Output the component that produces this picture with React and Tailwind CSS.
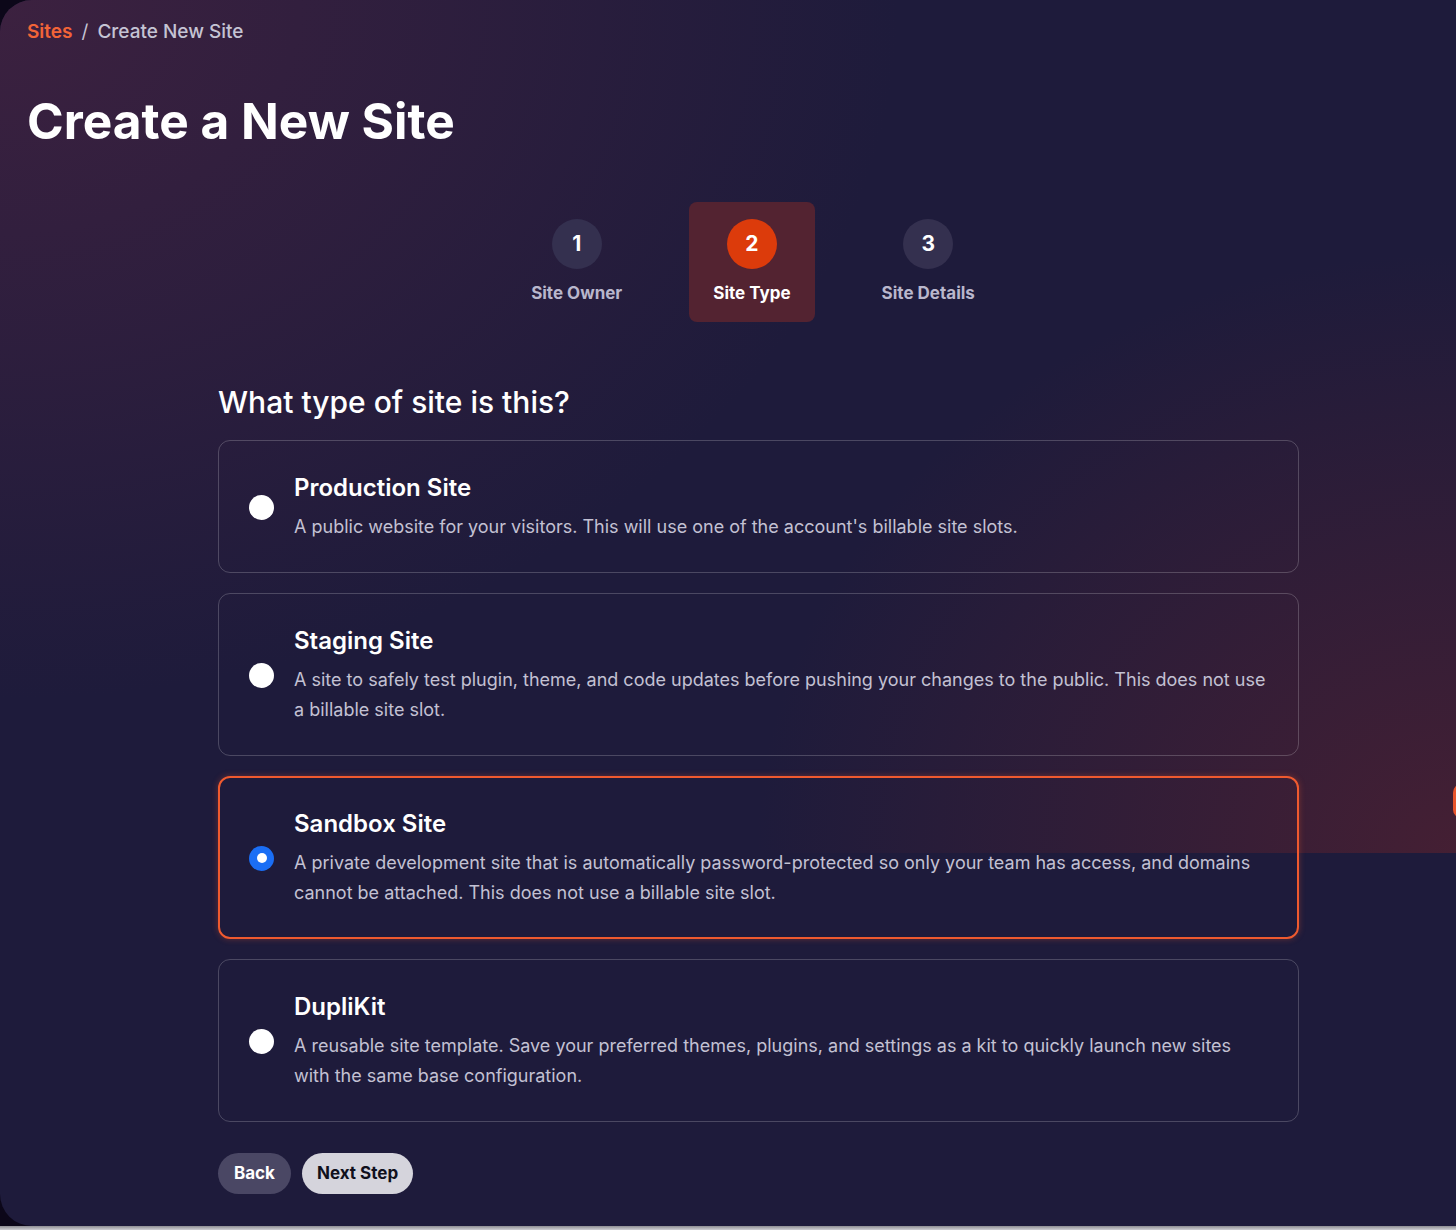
import { useState } from 'react'

const steps = [
  { n: 1, label: 'Site Owner' },
  { n: 2, label: 'Site Type' },
  { n: 3, label: 'Site Details' },
]

const siteTypes = [
  {
    id: 'production',
    title: 'Production Site',
    text: "A public website for your visitors. This will use one of the account's billable site slots.",
  },
  {
    id: 'staging',
    title: 'Staging Site',
    text: 'A site to safely test plugin, theme, and code updates before pushing your changes to the public. This does not use a billable site slot.',
  },
  {
    id: 'sandbox',
    title: 'Sandbox Site',
    text: 'A private development site that is automatically password-protected so only your team has access, and domains cannot be attached. This does not use a billable site slot.',
  },
  {
    id: 'duplikit',
    title: 'DupliKit',
    text: 'A reusable site template. Save your preferred themes, plugins, and settings as a kit to quickly launch new sites with the same base configuration.',
  },
]

function Stepper({ current }) {
  return (
    <div className="flex justify-center gap-[43px] pl-[50px]">
      {steps.map((step) => {
        const active = step.n === current
        return (
          <div
            key={step.n}
            className={
              'flex flex-col items-center gap-3 rounded-lg px-6 py-[17px] ' +
              (active ? 'bg-[#532331]' : '')
            }
          >
            <div
              className={
                'flex h-[50px] w-[50px] items-center justify-center rounded-full text-[21px] font-bold text-white ' +
                (active ? 'bg-[#dc3b0b]' : 'bg-[#34304f]')
              }
            >
              {step.n}
            </div>
            <span className={'text-[17px] font-bold leading-6 ' + (active ? 'text-white' : 'text-[#b9b7cc]')}>
              {step.label}
            </span>
          </div>
        )
      })}
    </div>
  )
}

function TypeCard({ item, selected, onSelect }) {
  return (
    <button
      type="button"
      onClick={onSelect}
      className={
        'flex w-full items-center gap-5 rounded-xl text-left ' +
        (selected
          ? 'border-2 border-[#ef5a2f] px-[29px] pb-[29px] pt-[30px] shadow-[0_0_6px_rgba(239,90,47,0.35)]'
          : 'border border-white/20 px-[30px] pb-[30px] pt-[31px]')
      }
    >
      {selected ? (
        <span className="flex h-[25px] w-[25px] shrink-0 items-center justify-center rounded-full bg-[#1a6ef5]">
          <span className="h-[10px] w-[10px] rounded-full bg-white" />
        </span>
      ) : (
        <span className="h-[25px] w-[25px] shrink-0 rounded-full bg-white" />
      )}
      <div className="flex flex-col gap-2">
        <h3 className="text-[24px] font-semibold leading-8 text-white">{item.title}</h3>
        <p className="text-[18px] leading-[30px] text-[#c3c1d3]">{item.text}</p>
      </div>
    </button>
  )
}

export default function App() {
  const [selected, setSelected] = useState('sandbox')

  return (
    <div className="bg-[#0c0719] font-['Inter','Noto_Sans',sans-serif]">
      <div className="relative h-[1226px] overflow-hidden rounded-l-[32px] bg-[#1e1b3b]">
        <div className="absolute inset-x-0 top-0 h-[853px] bg-[radial-gradient(ellipse_900px_700px_at_0%_0%,rgba(70,35,65,0.75),transparent),radial-gradient(ellipse_700px_600px_at_100%_100%,rgba(75,32,50,0.85),transparent)]" />
        <div className="absolute right-[-14px] top-[784px] h-[34px] w-[17px] rounded-full bg-[#e8542c]" />

        <div className="relative px-[27px] pt-[18px]">
          <nav className="flex items-center gap-[9px] text-[19px] leading-7">
            <span className="font-semibold text-[#f26438]">Sites</span>
            <span className="text-[#c5c4d4]">/</span>
            <span className="font-medium text-[#c5c4d4]">Create New Site</span>
          </nav>

          <h1 className="mt-[51px] text-[49.6px] font-bold leading-[48px] text-white">
            Create a New Site
          </h1>

          <div className="mt-[57px]">
            <Stepper current={2} />
          </div>

          <div className="ml-[191px] mt-[62px] w-[1081px]">
            <h2 className="text-[30px] font-medium leading-9 text-white">What type of site is this?</h2>

            <div className="mt-5 flex flex-col gap-5">
              {siteTypes.map((item) => (
                <TypeCard
                  key={item.id}
                  item={item}
                  selected={selected === item.id}
                  onSelect={() => setSelected(item.id)}
                />
              ))}
            </div>

            <div className="mt-[31px] flex gap-[11px]">
              <button type="button" className="h-[41px] rounded-full bg-[#4a4764] px-4 text-[17px] font-bold text-white">
                Back
              </button>
              <button type="button" className="h-[41px] rounded-full bg-[#d5d4dc] px-[15px] text-[17px] font-bold text-[#10101c]">
                Next Step
              </button>
            </div>
          </div>
        </div>
      </div>
      <div className="h-1 bg-[linear-gradient(#8d8d93,#cfcfd4)]" />
    </div>
  )
}
